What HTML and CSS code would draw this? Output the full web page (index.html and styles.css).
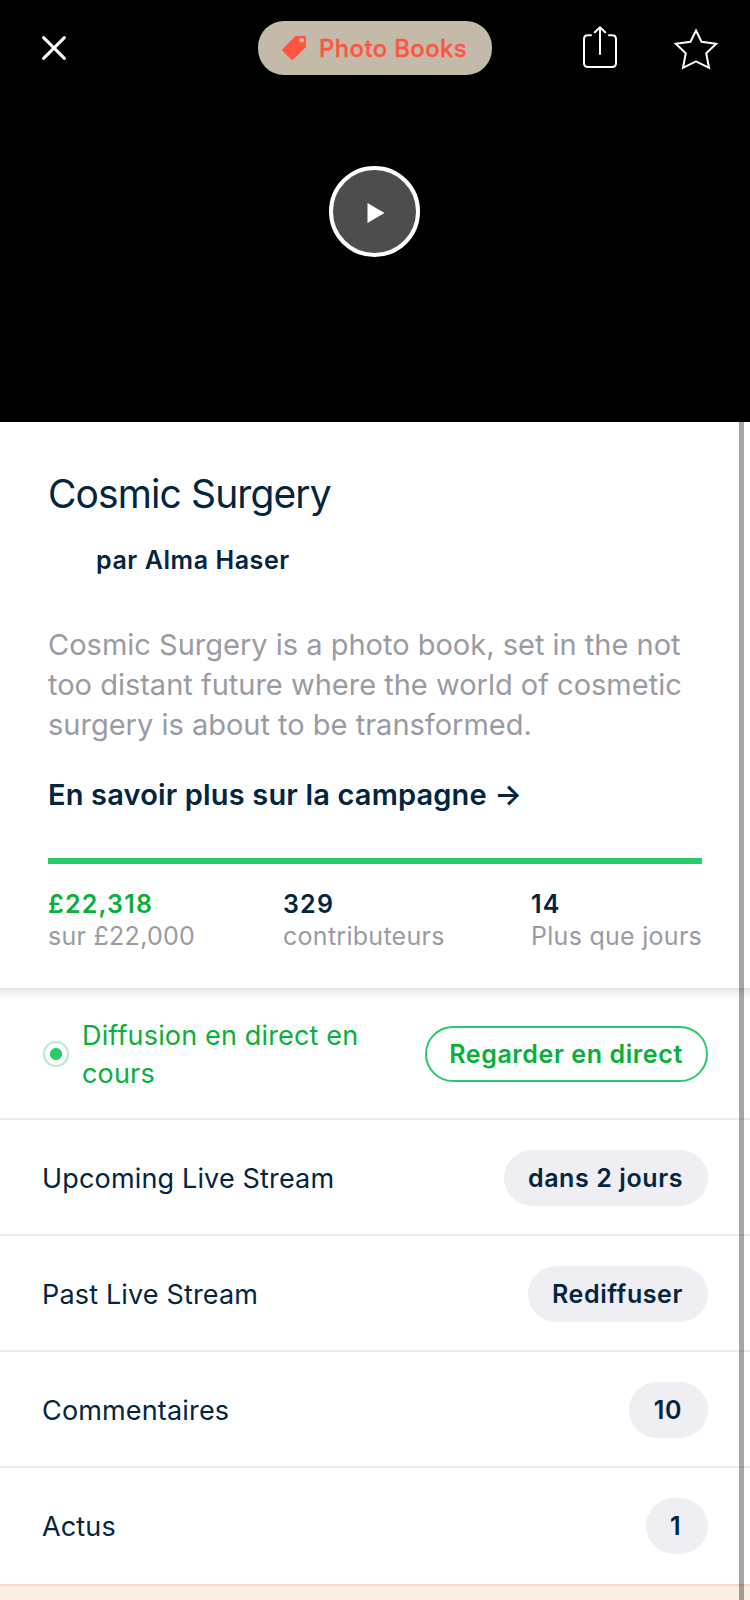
FILE: index.html
```html
<!DOCTYPE html>
<html lang="fr">
<head>
<meta charset="utf-8">
<title>Cosmic Surgery</title>
<link rel="stylesheet" href="styles.css">
</head>
<body>
<div class="screen">
  <header class="hero">
    <nav class="topbar">
      <svg class="icon-close" width="24" height="24" viewBox="0 0 24 24"><path d="M1.6 1.6 22.4 22.4M22.4 1.6 1.6 22.4"/></svg>
      <div class="category">
        <svg width="24" height="24" viewBox="0 0 24 24"><path fill-rule="evenodd" d="M13.4 0H22.8Q24 0 24 1.2V11L11 23.700Q10.300 24.300 9.600 23.700L.4 14.700Q-.3 14 .4 13.300ZM19.800 2a2.300 2.300 0 1 0 0 4.600 2.300 2.300 0 0 0 0-4.600Z"/></svg>
        <span class="category-name">Photo Books</span>
      </div>
      <svg class="icon-share" width="34" height="42" viewBox="0 0 34 42"><path d="M8 9.2H5Q1 9.200 1 13.200V37Q1 41 5 41H29Q33 41 33 37V13.200Q33 9.200 29 9.200H26M17 28V1.200M11.800 6.200 17 1.200 22.200 6.200"/></svg>
      <svg class="icon-star" width="44" height="42" viewBox="0 0 44 42"><path d="M22 2.500 27.500 13.800 42.200 15.800 32.200 25.300 35 39.800 22 33.300 9 39.800 11.800 25.300 1.800 15.800 16.500 13.800Z"/></svg>
    </nav>
    <div class="play"><svg width="18" height="20" viewBox="0 0 18 20"><path d="M.5 0 17.500 10 .5 20Z"/></svg></div>
  </header>

  <main class="body">
    <section class="summary">
      <h1 class="title">Cosmic Surgery</h1>
      <p class="author">par Alma Haser</p>
      <p class="blurb">Cosmic Surgery is a photo book, set in the not<br>too distant future where the world of cosmetic<br>surgery is about to be transformed.</p>
      <a class="more">En savoir plus sur la campagne →</a>
      <div class="progress"></div>
      <div class="stats">
        <div class="stat funded"><b>£22,318</b><span>sur £22,000</span></div>
        <div class="stat backers"><b>329</b><span>contributeurs</span></div>
        <div class="stat days"><b>14</b><span>Plus que jours</span></div>
      </div>
    </section>

    <section class="rows">
      <div class="row live">
        <i class="dot"></i>
        <span class="label">Diffusion en direct en<br>cours</span>
        <span class="pill outline">Regarder en direct</span>
      </div>
      <div class="row"><span class="label">Upcoming Live Stream</span><span class="pill w-soon">dans 2 jours</span></div>
      <div class="row"><span class="label">Past Live Stream</span><span class="pill w-replay">Rediffuser</span></div>
      <div class="row"><span class="label">Commentaires</span><span class="pill w-ten">10</span></div>
      <div class="row last"><span class="label">Actus</span><span class="pill w-one">1</span></div>
    </section>
    <div class="rewards"></div>
    <div class="scrollbar"></div>
  </main>
</div>
</body>
</html>
```
FILE: styles.css
```css
* { box-sizing: border-box; }
body { margin: 0; background: #fff; font-family: Inter, "Liberation Sans", sans-serif; color: #03253f; }
h1, p { margin: 0; }
svg { display: block; flex: none; }
.screen { width: 750px; height: 1600px; overflow: hidden; display: flex; flex-direction: column; }

.hero { height: 422px; background: #000; flex: none; }
.topbar { display: flex; align-items: flex-start; padding: 21px 30px 0 42px; height: 166px; }
.icon-close { margin-top: 15px; stroke: #fff; stroke-width: 3; stroke-linecap: round; fill: none; }
.category { margin-left: 192px; width: 234px; height: 54px; border-radius: 26px; background: #c3baaa; display: flex; align-items: center; padding-left: 24px; gap: 13px; color: #ff5540; }
.category svg { fill: currentColor; }
.category-name { font-size: 24px; font-weight: 500; white-space: nowrap; letter-spacing: .35px; padding-top: 1px; -webkit-text-stroke: .3px currentColor; }
.icon-share { margin: 5px 0 0 91px; stroke: #fff; stroke-width: 2; stroke-linecap: round; stroke-linejoin: round; fill: none; }
.icon-star { margin: 7px 0 0 57px; stroke: #fff; stroke-width: 2; fill: none; }
.play { width: 91px; height: 91px; margin-left: 329px; border: 4px solid #fff; border-radius: 50%; background: #4d4d4d; display: flex; align-items: center; justify-content: center; padding: 3px 0 0 2px; }
.play svg { fill: #fff; }

.body { position: relative; flex: 1; display: flex; flex-direction: column; }
.summary { flex: none; height: 566px; padding: 48px 48px 0; display: flex; flex-direction: column; background: #fff; }
.title { font-size: 39px; line-height: 48px; font-weight: 400; letter-spacing: -.9px; }
.author { margin: 26px 0 0 48px; font-size: 25px; line-height: 32px; font-weight: 600; letter-spacing: .57px; }
.blurb { margin-top: 49px; font-size: 29px; line-height: 40px; color: #9a9aa3; white-space: nowrap; }
.more { margin-top: 32px; font-size: 29px; line-height: 36px; font-weight: 600; white-space: nowrap; letter-spacing: .16px; }
.progress { margin-top: 45px; height: 6px; background: #27cb69; }
.stats { margin-top: 24px; display: grid; grid-template-columns: 235px 248px auto; }
.stat { display: flex; flex-direction: column; font-size: 25px; line-height: 32px; white-space: nowrap; letter-spacing: .28px; }
.stat b { font-weight: 600; letter-spacing: 1.2px; }
.stat span { color: #9a9aa3; }
.funded b { color: #08b03b; }

.row { display: flex; align-items: center; justify-content: space-between; height: 116px; padding: 2px 42px 0; border-bottom: 2px solid #ececec; font-size: 27px; line-height: 38px; }
.label { white-space: nowrap; letter-spacing: .16px; padding-top: 2px; }
.live { height: 132px; color: #08b03b; background: linear-gradient(#e0e0e0, #f0f0f0 4px, #fafafa 8px, #fff 12px); }
.live .label { margin-right: auto; padding-left: 13px; }
.dot { flex: none; width: 26px; height: 26px; margin-left: 1px; border: 2px solid #b7eac8; border-radius: 50%; background: radial-gradient(circle, #27cb69 5.6px, transparent 6.4px); }
.pill { height: 56px; border-radius: 28px; background: #efeef3; font-size: 25px; font-weight: 600; letter-spacing: .6px; display: flex; align-items: center; justify-content: center; white-space: nowrap; padding-right: 1px; }
.outline { width: 283px; border: 2px solid #27cb69; background: #fff; }
.w-soon { width: 204px; }
.w-replay { width: 180px; }
.w-ten { width: 79px; }
.w-one { width: 62px; padding-right: 3px; }
.row.last { padding: 0 42px; border: 0; }
.rewards { flex: 1; border-top: 2px solid #f9d7ca; background: #f8eee3; }
.scrollbar { position: absolute; top: 0; bottom: 0; left: 739px; width: 5px; background: rgba(0, 0, 0, .35); }
```
